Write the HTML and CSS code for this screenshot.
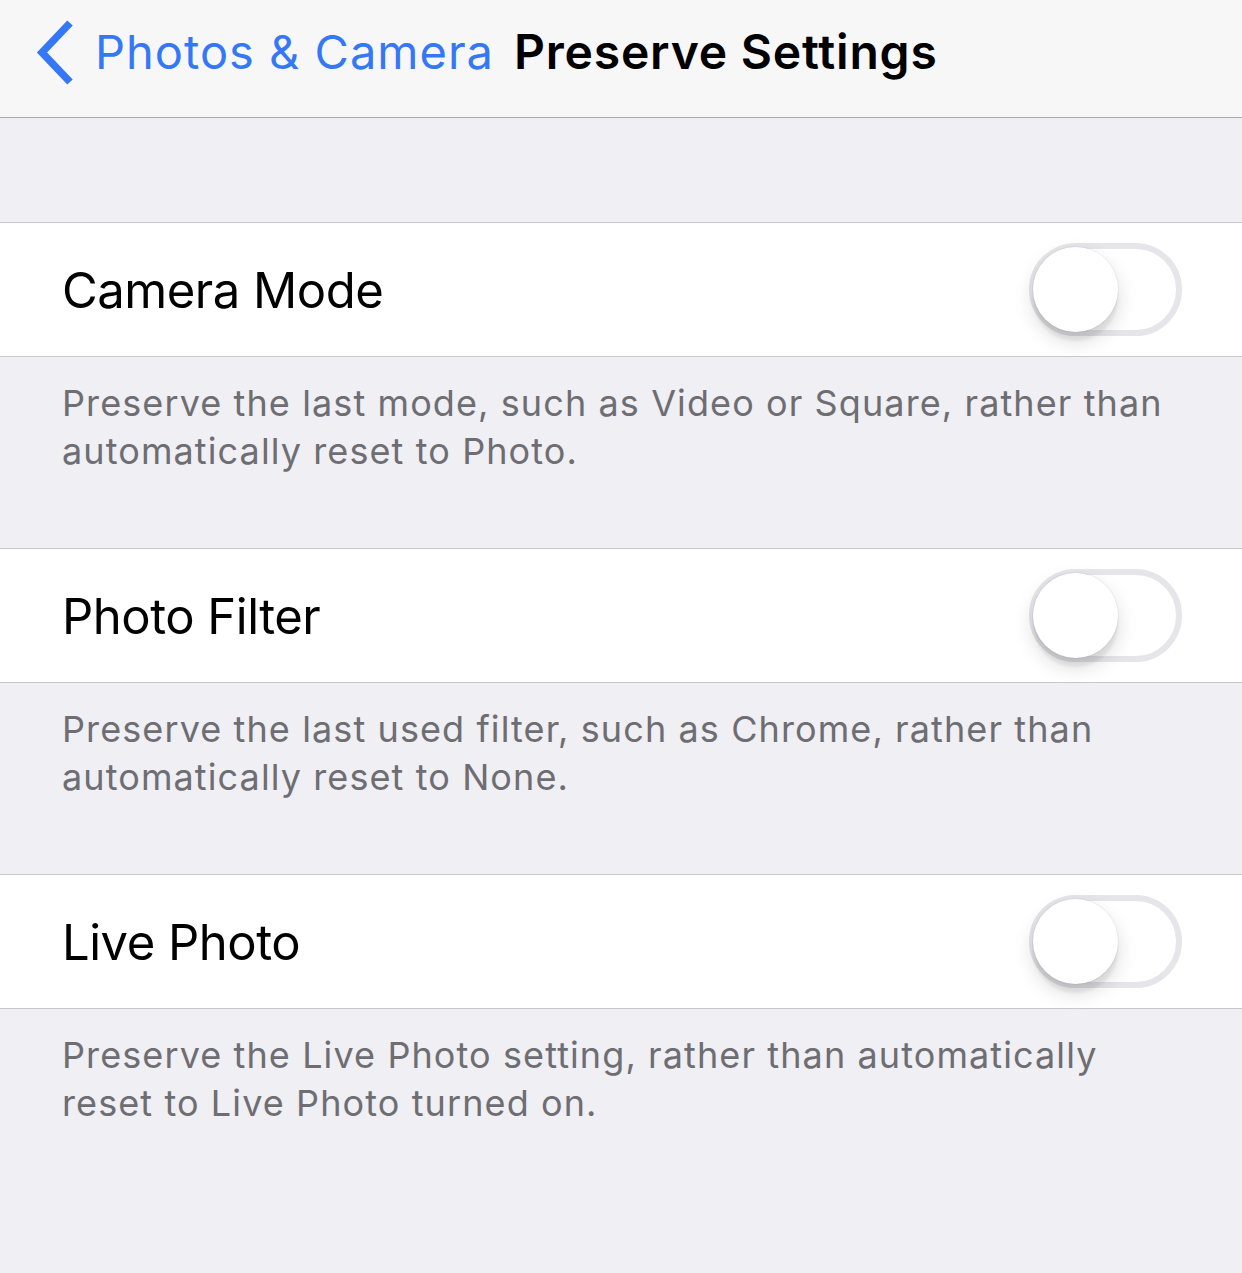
FILE: index.html
```html
<!DOCTYPE html>
<html lang="en">
<head>
<meta charset="utf-8">
<title>Preserve Settings</title>
<link rel="stylesheet" href="styles.css">
</head>
<body>
<header class="navbar">
  <a class="back" href="#">
    <svg class="chevron" width="44" height="66" viewBox="0 0 44 66" aria-hidden="true">
      <polyline points="41,4 13,33.5 41,63" fill="none" stroke="#3478f6" stroke-width="7.5" stroke-linecap="butt" stroke-linejoin="miter"/>
    </svg>
    <span class="back-label">Photos &amp; Camera</span>
  </a>
  <h1 class="title">Preserve Settings</h1>
</header>

<main class="content">
  <div class="spacer"></div>

  <section class="group">
    <div class="cell">
      <span class="cell-label">Camera Mode</span>
      <span class="switch"></span>
    </div>
  </section>
  <p class="footer">Preserve the last mode, such as Video or Square, rather than automatically reset to Photo.</p>

  <section class="group">
    <div class="cell">
      <span class="cell-label">Photo Filter</span>
      <span class="switch"></span>
    </div>
  </section>
  <p class="footer">Preserve the last used filter, such as Chrome, rather than automatically reset to None.</p>

  <section class="group">
    <div class="cell">
      <span class="cell-label">Live Photo</span>
      <span class="switch"></span>
    </div>
  </section>
  <p class="footer">Preserve the Live Photo setting, rather than automatically reset to Live Photo turned on.</p>
</main>
</body>
</html>
```
FILE: styles.css
```css
* { box-sizing: border-box; }

html, body {
  margin: 0;
  padding: 0;
}

body {
  width: 1242px;
  min-height: 1273px;
  background: #efeff4;
  font-family: Inter, "Noto Sans", "Liberation Sans", sans-serif;
  -webkit-font-smoothing: antialiased;
}

.navbar {
  height: 118px;
  background: #f7f7f8;
  border-bottom: 1px solid #a9a9ac;
  display: flex;
  align-items: center;
  padding-left: 29px;
  padding-bottom: 14px;
}

.back {
  display: flex;
  align-items: center;
  text-decoration: none;
  color: #3478f6;
}

.chevron {
  display: block;
  margin-right: 22px;
}

.back-label {
  font-size: 47px;
  font-weight: 400;
  letter-spacing: 1px;
  color: #3478f6;
}

.title {
  margin: 0 0 0 20px;
  font-size: 48px;
  font-weight: 600;
  letter-spacing: 0.8px;
  color: #000;
}

.spacer {
  height: 104px;
}

.group {
  background: #fff;
  border-top: 1px solid #c8c7cc;
  border-bottom: 1px solid #c8c7cc;
}

.cell {
  height: 133px;
  display: flex;
  align-items: center;
  justify-content: space-between;
  padding: 0 60px 0 62px;
}

.cell-label {
  font-size: 49px;
  letter-spacing: -0.5px;
  color: #000;
  padding-top: 2px;
}

.switch {
  position: relative;
  width: 153px;
  height: 93px;
  border: 6px solid #e5e5ea;
  border-radius: 47px;
  background: #fff;
}

.switch::after {
  content: "";
  position: absolute;
  left: -2px;
  top: -2px;
  width: 85px;
  height: 85px;
  border-radius: 50%;
  background: #fff;
  box-shadow: 0 9px 3px rgba(0,0,0,0.06), 0 9px 20px rgba(0,0,0,0.15), 0 0 0 1px rgba(0,0,0,0.04);
}

.footer {
  margin: 0;
  height: 191px;
  padding: 22px 62px 0 62px;
  font-size: 36px;
  line-height: 48px;
  letter-spacing: 1.1px;
  color: #6d6d72;
}
```
